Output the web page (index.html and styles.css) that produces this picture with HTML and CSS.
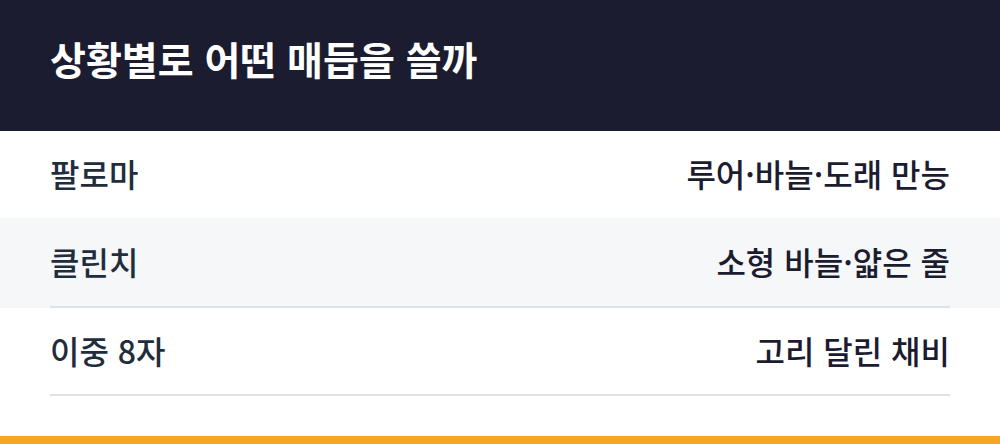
FILE: index.html
```html
<!DOCTYPE html>
<html lang="ko">
<head>
<meta charset="utf-8">
<link rel="stylesheet" href="styles.css">
</head>
<body>
<div class="card">
  <header class="head">
    <h1 class="title">상황별로 어떤 매듭을 쓸까</h1>
  </header>
  <div class="rows">
    <div class="row">
      <span class="name">팔로마</span>
      <span class="use">루어·바늘·도래 만능</span>
    </div>
    <div class="row alt lined">
      <span class="name">클린치</span>
      <span class="use">소형 바늘·얇은 줄</span>
    </div>
    <div class="row lined">
      <span class="name">이중 8자</span>
      <span class="use">고리 달린 채비</span>
    </div>
  </div>
  <div class="spacer"></div>
  <div class="bar"></div>
</div>
</body>
</html>
```
FILE: styles.css
```css
* { box-sizing: border-box; margin: 0; padding: 0; }
html, body { width: 1000px; height: 444px; overflow: hidden; background: #ffffff; }
body { font-family: "Noto Sans CJK KR", "Noto Sans", sans-serif; }
.card { display: flex; flex-direction: column; height: 444px; }
.head {
  background: #1c1c30;
  height: 131px;
  padding: 0 50px 14px;
  display: flex;
  align-items: center;
}
.title {
  color: #ffffff;
  font-size: 39px;
  font-weight: 700;
  line-height: 1;
}
.rows { display: flex; flex-direction: column; }
.row {
  display: flex;
  justify-content: space-between;
  align-items: center;
  height: 87px;
  padding: 0 50px 4px;
  font-size: 32px;
  font-weight: 500;
  line-height: 1;
}
.row.alt { background: #f6f7f9; }
.row.lined { position: relative; height: 90px; }
.row.lined:last-child { height: 88px; }
.row.lined::after {
  content: "";
  position: absolute;
  left: 50px; right: 50px; bottom: 0;
  height: 2px;
  background: #dfe3e8;
}
.name { color: #1f2d3d; }
.use { color: #1c1c30; }
.spacer { flex: 1; }
.bar { height: 8px; background: #f5a623; }
```
